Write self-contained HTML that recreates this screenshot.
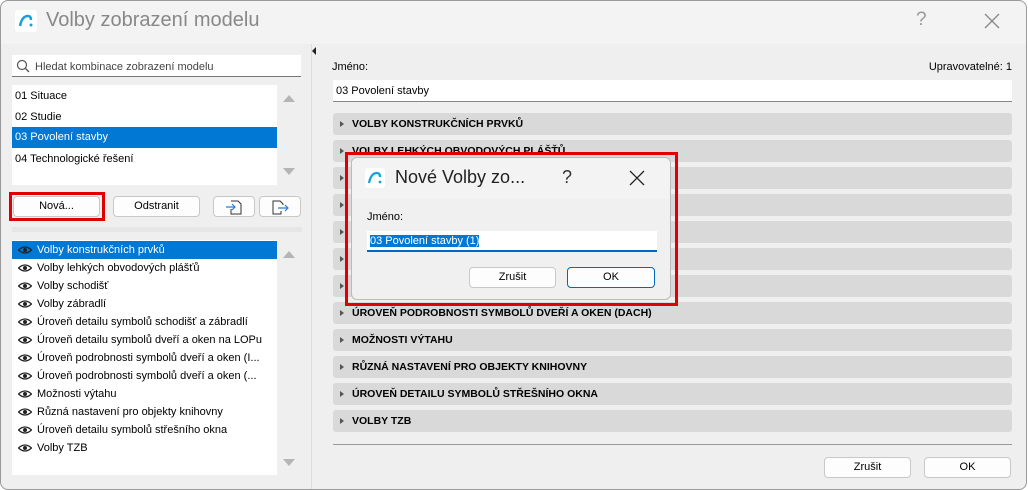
<!DOCTYPE html>
<html><head><meta charset="utf-8"><style>
*{box-sizing:border-box;margin:0;padding:0}
body{width:1028px;height:490px;background:#fff;font-family:"Liberation Sans",sans-serif;font-size:11px;color:#000;position:relative;overflow:hidden}
.a{position:absolute}
.win{left:0;top:0;width:1027px;height:490px;background:#efefef;border-radius:8px;overflow:hidden}
.frame{left:0;top:0;width:1027px;height:490px;border:1px solid #9a9a9a;border-radius:8px;pointer-events:none}
.btn{position:absolute;background:#fdfdfd;border:1px solid #c8c8c8;border-radius:4px;text-align:center;font-size:11px;line-height:19px}
.bar{position:absolute;left:333px;width:679px;height:22px;background:#d9d9d9;border-radius:3px;font-weight:bold;font-size:10.5px;line-height:22px;padding-left:19px}
.bar:before{content:"";position:absolute;left:7px;top:8px;border-left:4px solid #555;border-top:3px solid transparent;border-bottom:3px solid transparent}
.row{position:absolute;left:0;width:264px;height:18px;line-height:18px;padding-left:25px;white-space:nowrap}
.eye{position:absolute;left:6px;top:5px;width:14px;height:8px}
.up{position:absolute;border-left:6px solid transparent;border-right:6px solid transparent;border-bottom:7px solid #b5b5b5}
.dn{position:absolute;border-left:6px solid transparent;border-right:6px solid transparent;border-top:7px solid #b5b5b5}
</style></head><body>
<div class="a win">
<div class="a" style="left:0;top:0;width:1028px;height:44px;background:#f3f3f3"></div>
<svg class="a" style="left:15px;top:10px" width="22" height="22"><rect x="0" y="0" width="22" height="22" rx="3" fill="#fff"/><path d="M5 16 Q7 6 13 6 Q16 6 16 10" stroke="#1aa0d8" stroke-width="2.5" fill="none"/><circle cx="16" cy="15" r="1.5" fill="#1aa0d8"/></svg>
<div class="a" style="left:46px;top:9px;font-size:20px;color:#888">Volby zobrazení modelu</div>
<div class="a" style="left:916px;top:9px;font-size:19px;color:#999">?</div>
<svg class="a" style="left:984px;top:13px" width="16" height="16"><path d="M1 1L15 15M15 1L1 15" stroke="#888" stroke-width="1.3"/></svg>

<div class="a" style="left:12px;top:55px;width:289px;height:22px;background:#fff;border-bottom:1px solid #777"></div>
<svg class="a" style="left:16px;top:59px" width="14" height="14"><circle cx="6" cy="6" r="4.5" stroke="#555" fill="none" stroke-width="1.2"/><path d="M9.5 9.5L13 13" stroke="#555" stroke-width="1.3"/></svg>
<div class="a" style="left:35px;top:61px;color:#444">Hledat kombinace zobrazení modelu</div>

<div class="a" style="left:12px;top:85px;width:265px;height:100px;background:#fff">
<div class="a" style="left:3px;top:5px">01 Situace</div>
<div class="a" style="left:3px;top:26px">02 Studie</div>
<div class="a" style="left:0;top:42px;width:265px;height:21px;background:#0078d4;color:#fff;padding:4px 3px">03 Povolení stavby</div>
<div class="a" style="left:3px;top:68px">04 Technologické řešení</div>
</div>
<div class="up" style="left:283px;top:95px"></div>
<div class="dn" style="left:283px;top:168px"></div>

<div class="a" style="left:9px;top:192px;width:96px;height:29px;border:3px solid #e00000"></div>
<div class="btn" style="left:13px;top:196px;width:87px;height:21px">Nová...</div>
<div class="btn" style="left:113px;top:196px;width:87px;height:21px">Odstranit</div>
<div class="btn" style="left:213px;top:196px;width:42px;height:21px"><svg width="20" height="18" style="margin-top:1px"><path d="M7 3H14L17 6V16H7V11" stroke="#333" fill="none"/><path d="M2 9H11M8 6L11 9L8 12" stroke="#2b7fd4" fill="none" stroke-width="1.2"/></svg></div>
<div class="btn" style="left:259px;top:196px;width:42px;height:21px"><svg width="20" height="18" style="margin-top:1px"><path d="M11 13V16H3V3H10L13 6V7" stroke="#333" fill="none"/><path d="M8 10H18M15 7L18 10L15 13" stroke="#2b7fd4" fill="none" stroke-width="1.2"/></svg></div>
<div class="a" style="left:12px;top:227px;width:290px;height:5px;background:#e6e6e6"></div>

<div class="a" style="left:12px;top:240px;width:265px;height:235px;background:#fff">
<div class="row" style="top:1px;background:#0078d4;color:#fff;width:265px"><svg class="eye" viewBox="0 0 14 8"><path d="M0.5 4Q7 -2 13.5 4Q7 10 0.5 4Z" fill="none" stroke="#222" stroke-width="1.2"/><circle cx="7" cy="4" r="2" fill="#222"/></svg>Volby konstrukčních prvků</div>
<div class="row" style="top:19px"><svg class="eye" viewBox="0 0 14 8"><path d="M0.5 4Q7 -2 13.5 4Q7 10 0.5 4Z" fill="none" stroke="#222" stroke-width="1.2"/><circle cx="7" cy="4" r="2" fill="#222"/></svg>Volby lehkých obvodových plášťů</div>
<div class="row" style="top:37px"><svg class="eye" viewBox="0 0 14 8"><path d="M0.5 4Q7 -2 13.5 4Q7 10 0.5 4Z" fill="none" stroke="#222" stroke-width="1.2"/><circle cx="7" cy="4" r="2" fill="#222"/></svg>Volby schodišť</div>
<div class="row" style="top:55px"><svg class="eye" viewBox="0 0 14 8"><path d="M0.5 4Q7 -2 13.5 4Q7 10 0.5 4Z" fill="none" stroke="#222" stroke-width="1.2"/><circle cx="7" cy="4" r="2" fill="#222"/></svg>Volby zábradlí</div>
<div class="row" style="top:73px"><svg class="eye" viewBox="0 0 14 8"><path d="M0.5 4Q7 -2 13.5 4Q7 10 0.5 4Z" fill="none" stroke="#222" stroke-width="1.2"/><circle cx="7" cy="4" r="2" fill="#222"/></svg>Úroveň detailu symbolů schodišť a zábradlí</div>
<div class="row" style="top:91px"><svg class="eye" viewBox="0 0 14 8"><path d="M0.5 4Q7 -2 13.5 4Q7 10 0.5 4Z" fill="none" stroke="#222" stroke-width="1.2"/><circle cx="7" cy="4" r="2" fill="#222"/></svg>Úroveň detailu symbolů dveří a oken na LOPu</div>
<div class="row" style="top:109px"><svg class="eye" viewBox="0 0 14 8"><path d="M0.5 4Q7 -2 13.5 4Q7 10 0.5 4Z" fill="none" stroke="#222" stroke-width="1.2"/><circle cx="7" cy="4" r="2" fill="#222"/></svg>Úroveň podrobnosti symbolů dveří a oken (I...</div>
<div class="row" style="top:127px"><svg class="eye" viewBox="0 0 14 8"><path d="M0.5 4Q7 -2 13.5 4Q7 10 0.5 4Z" fill="none" stroke="#222" stroke-width="1.2"/><circle cx="7" cy="4" r="2" fill="#222"/></svg>Úroveň podrobnosti symbolů dveří a oken (...</div>
<div class="row" style="top:145px"><svg class="eye" viewBox="0 0 14 8"><path d="M0.5 4Q7 -2 13.5 4Q7 10 0.5 4Z" fill="none" stroke="#222" stroke-width="1.2"/><circle cx="7" cy="4" r="2" fill="#222"/></svg>Možnosti výtahu</div>
<div class="row" style="top:163px"><svg class="eye" viewBox="0 0 14 8"><path d="M0.5 4Q7 -2 13.5 4Q7 10 0.5 4Z" fill="none" stroke="#222" stroke-width="1.2"/><circle cx="7" cy="4" r="2" fill="#222"/></svg>Různá nastavení pro objekty knihovny</div>
<div class="row" style="top:181px"><svg class="eye" viewBox="0 0 14 8"><path d="M0.5 4Q7 -2 13.5 4Q7 10 0.5 4Z" fill="none" stroke="#222" stroke-width="1.2"/><circle cx="7" cy="4" r="2" fill="#222"/></svg>Úroveň detailu symbolů střešního okna</div>
<div class="row" style="top:199px"><svg class="eye" viewBox="0 0 14 8"><path d="M0.5 4Q7 -2 13.5 4Q7 10 0.5 4Z" fill="none" stroke="#222" stroke-width="1.2"/><circle cx="7" cy="4" r="2" fill="#222"/></svg>Volby TZB</div>
</div>
<div class="up" style="left:283px;top:251px"></div>
<div class="dn" style="left:283px;top:459px"></div>

<div class="a" style="left:311px;top:44px;width:1px;height:446px;background:#ddd"></div>
<div class="a" style="left:312px;top:47px;border-right:4px solid #222;border-top:4px solid transparent;border-bottom:4px solid transparent"></div>

<div class="a" style="left:332px;top:61px">Jméno:</div>
<div class="a" style="right:15px;top:61px">Upravovatelné: 1</div>
<div class="a" style="left:333px;top:80px;width:679px;height:22px;background:#fff;border-bottom:1px solid #888;padding:5px 3px">03 Povolení stavby</div>

<div class="bar" style="top:113px">VOLBY KONSTRUKČNÍCH PRVKŮ</div>
<div class="bar" style="top:140px">VOLBY LEHKÝCH OBVODOVÝCH PLÁŠŤŮ</div>
<div class="bar" style="top:167px"></div>
<div class="bar" style="top:194px"></div>
<div class="bar" style="top:221px"></div>
<div class="bar" style="top:248px"></div>
<div class="bar" style="top:275px"></div>
<div class="bar" style="top:302px">ÚROVEŇ PODROBNOSTI SYMBOLŮ DVEŘÍ A OKEN (DACH)</div>
<div class="bar" style="top:329px">MOŽNOSTI VÝTAHU</div>
<div class="bar" style="top:356px">RŮZNÁ NASTAVENÍ PRO OBJEKTY KNIHOVNY</div>
<div class="bar" style="top:383px">ÚROVEŇ DETAILU SYMBOLŮ STŘEŠNÍHO OKNA</div>
<div class="bar" style="top:410px">VOLBY TZB</div>
<div class="a" style="left:333px;top:444px;width:679px;height:1px;background:#999"></div>
<div class="btn" style="left:824px;top:457px;width:87px;height:21px">Zrušit</div>
<div class="btn" style="left:924px;top:457px;width:87px;height:21px">OK</div>

<div class="a" style="left:345px;top:152px;width:333px;height:154px;border:3px solid #e00000"></div>
<div class="a" style="left:351px;top:157px;width:320px;height:143px;background:#f0f0f0;border:1px solid #bbb;border-radius:6px;overflow:hidden">
<div class="a" style="left:0;top:0;width:320px;height:41px;background:#f3f3f3"></div>
<svg class="a" style="left:13px;top:10px" width="20" height="20"><rect width="20" height="20" rx="3" fill="#fff"/><path d="M4 15 Q6 5 12 5 Q15 5 15 9" stroke="#1aa0d8" stroke-width="2.3" fill="none"/><circle cx="15" cy="14" r="1.4" fill="#1aa0d8"/></svg>
<div class="a" style="left:43px;top:9px;font-size:18px;color:#222">Nové Volby zo...</div>
<div class="a" style="left:210px;top:9px;font-size:18px;color:#333">?</div>
<svg class="a" style="left:277px;top:12px" width="16" height="16"><path d="M1 1L15 15M15 1L1 15" stroke="#222" stroke-width="1.3"/></svg>
<div class="a" style="left:15px;top:53px">Jméno:</div>
<div class="a" style="left:15px;top:73px;width:290px;height:21px;background:#fff;border-bottom:2px solid #0067c0;padding:4px 3px"><span style="background:#0078d4;color:#fff">03 Povolení stavby (1)</span></div>
<div class="btn" style="left:117px;top:109px;width:87px;height:21px">Zrušit</div>
<div class="btn" style="left:215px;top:109px;width:88px;height:21px;border-color:#0067c0">OK</div>
</div>
</div>
<div class="a frame"></div>
</body></html>
